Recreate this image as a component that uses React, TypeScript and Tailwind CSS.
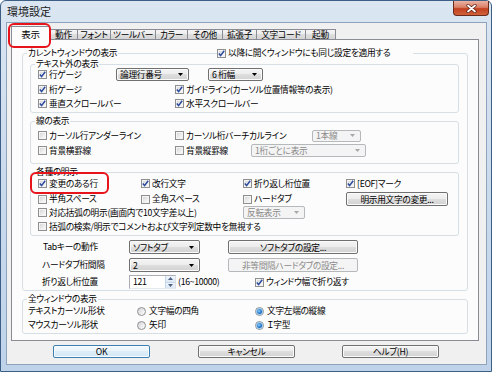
import React from "react";

function Check({ checked }: { checked?: boolean }) {
  return (
    <span className="relative inline-block w-[9px] h-[9px] shrink-0 border border-[#8e8f8f] bg-[linear-gradient(135deg,#cfd2d6_0%,#eeeeee_60%,#ffffff_100%)] shadow-[inset_0_0_0_1px_#f4f4f4]">
      {checked && (
        <svg className="absolute left-0 top-0" width="7" height="7" viewBox="0 0 7 7">
          <path d="M0.8 3.6 L2.6 5.6 L6.2 0.8" stroke="#2b4a9e" strokeWidth="1.5" fill="none" />
        </svg>
      )}
    </span>
  );
}

function CheckItem({ label, checked, className }: { label: string; checked?: boolean; className?: string }) {
  return (
    <div className={"flex items-center shrink-0 whitespace-nowrap " + (className ?? "")}>
      <Check checked={checked} />
      <span className="ml-[2px]">{label}</span>
    </div>
  );
}

function Radio({ checked }: { checked?: boolean }) {
  return (
    <span className="relative inline-flex items-center justify-center w-[9px] h-[9px] shrink-0 rounded-full border border-[#8e8f8f] bg-[linear-gradient(135deg,#cfd2d6_0%,#eeeeee_60%,#ffffff_100%)]">
      {checked && (
        <span className="w-[5px] h-[5px] rounded-full bg-[radial-gradient(circle_at_40%_40%,#8fd0ff_0%,#1a6fc4_60%,#0d4f9a_100%)] shadow-[0_0_0_1px_#9cc8ee]" />
      )}
    </span>
  );
}

function RadioItem({ label, checked, className }: { label: string; checked?: boolean; className?: string }) {
  return (
    <div className={"flex items-center shrink-0 whitespace-nowrap " + (className ?? "")}>
      <Radio checked={checked} />
      <span className="ml-[3px]">{label}</span>
    </div>
  );
}

function Arrow({ disabled }: { disabled?: boolean }) {
  return (
    <svg width="5" height="3" viewBox="0 0 5 3" className="shrink-0">
      <path d="M0 0 L5 0 L2.5 3 Z" fill={disabled ? "#a7a7a7" : "#000"} />
    </svg>
  );
}

function Combo({ text, className, disabled }: { text: string; className?: string; disabled?: boolean }) {
  return (
    <div
      className={
        "flex items-center shrink-0 rounded-[2px] border pl-[3px] pr-[5px] leading-[11px] whitespace-nowrap " +
        (disabled
          ? "border-[#b5b9bc] bg-[#f4f4f4] text-[#8a8a8a] "
          : "border-[#707070] bg-[linear-gradient(180deg,#f4f4f4_0%,#ececec_50%,#dedede_50%,#d2d2d2_100%)] shadow-[inset_0_0_0_1px_#fbfbfb] ") +
        (className ?? "")
      }
    >
      <span className="flex-1">{text}</span>
      <Arrow disabled={disabled} />
    </div>
  );
}

function Btn({ text, className, disabled, def }: { text: string; className?: string; disabled?: boolean; def?: boolean }) {
  return (
    <div
      className={
        "flex items-center justify-center shrink-0 rounded-[2px] border leading-[11px] whitespace-nowrap " +
        (disabled
          ? "border-[#b5b9bc] bg-[#f4f4f4] text-[#8a8a8a] "
          : def
          ? "border-[#3c7fb1] bg-[linear-gradient(180deg,#f3f9fd_0%,#e8f4fb_50%,#dcedf8_50%,#d3e8f6_100%)] shadow-[inset_0_0_0_1px_#f8fcfe] "
          : "border-[#707070] bg-[linear-gradient(180deg,#f4f4f4_0%,#ececec_50%,#dedede_50%,#d2d2d2_100%)] shadow-[inset_0_0_0_1px_#fbfbfb] ") +
        (className ?? "")
      }
    >
      {text}
    </div>
  );
}

function Group({ label, className, children }: { label: string; className?: string; children?: React.ReactNode }) {
  return (
    <div className={"relative shrink-0 border border-[#d5dfe5] rounded-[3px] flex flex-col " + (className ?? "")}>
      <span className="absolute top-[-6px] left-[4px] px-[1px] bg-[#fcfcfc] leading-[10px] whitespace-nowrap">{label}</span>
      {children}
    </div>
  );
}

function Tab({ text, className }: { text: string; className?: string }) {
  return (
    <div
      className={
        "-ml-px h-[10px] flex items-center justify-center border border-b-0 border-[#898c95] bg-[linear-gradient(180deg,#f4f4f4_0%,#ececec_50%,#dedede_50%,#d4d4d4_100%)] leading-[10px] whitespace-nowrap " +
        (className ?? "")
      }
    >
      {text}
    </div>
  );
}

export default function App() {
  return (
    <div className="relative w-[492px] h-[372px] overflow-hidden [font-family:'Noto_Sans_CJK_JP','Noto_Sans',sans-serif] [font-feature-settings:'palt'] text-[8.7px] tracking-[-0.3px] leading-[12px] text-black bg-white">
      <div className="w-full h-full flex flex-col border border-[#3e5f85] rounded-t-[6px] bg-[linear-gradient(180deg,#dbe6f2_0%,#cddcee_40%,#bed3ea_100%)]">
        {/* title bar */}
        <div className="h-[21px] shrink-0 flex items-start">
          <span className="ml-[6px] mt-[4px] text-[11px] tracking-normal leading-[13px] text-[#1a1a1a]">環境設定</span>
          <div className="ml-auto mr-[2px] w-[36px] h-[15px] rounded-b-[4px] border border-t-0 border-[#6a2a1c] bg-[linear-gradient(180deg,#eab3a4_0%,#d98068_45%,#c2401f_55%,#d0633c_100%)] flex items-center justify-center">
            <svg width="11" height="9" viewBox="0 0 11 9">
              <path d="M2 1.5 L9 7.5 M9 1.5 L2 7.5" stroke="#5a1c10" strokeWidth="3.2" strokeLinecap="round" />
              <path d="M2 1.5 L9 7.5 M9 1.5 L2 7.5" stroke="#ffffff" strokeWidth="1.8" strokeLinecap="round" />
            </svg>
          </div>
        </div>
        {/* client */}
        <div className="ml-[5px] w-[481px] h-[343px] shrink-0 border border-[#8ea4bd] bg-[#f0f0f0] flex flex-col">
          {/* tabs */}
          <div className="ml-[4px] mt-[3px] h-[13px] flex items-end shrink-0">
            <div className="relative z-10 -mb-px w-[39px] h-[14px] border border-b-0 border-[#898c95] bg-[#fcfcfc] flex items-start justify-center pt-[2px] leading-[10px] text-[9.5px]">
              表示
            </div>
            <Tab text="動作" className="w-[29px]" />
            <Tab text="フォント" className="w-[34px]" />
            <Tab text="ツールバー" className="w-[46px]" />
            <Tab text="カラー" className="w-[33px]" />
            <Tab text="その他" className="w-[36px]" />
            <Tab text="拡張子" className="w-[35px]" />
            <Tab text="文字コード" className="w-[50px]" />
            <Tab text="起動" className="w-[31px]" />
          </div>
          {/* panel */}
          <div className="ml-[4px] w-[468px] h-[302px] shrink-0 border border-[#898c95] bg-[#fcfcfc] flex flex-col">
            <Group label="カレントウィンドウの表示" className="ml-[10px] mt-[13px] w-[446px] h-[238px]">
              <div className="absolute top-[-6px] left-[194px] w-[196px] h-[10px] bg-[#fcfcfc] flex items-center">
                <CheckItem checked label="以降に開くウィンドウにも同じ設定を適用する" />
              </div>

              <Group label="テキスト外の表示" className="ml-[7px] mt-[10px] w-[429px] h-[49px]">
                <div className="mt-[3px] h-[13px] pl-[7px] flex items-center">
                  <CheckItem checked label="行ゲージ" className="w-[78px]" />
                  <Combo text="論理行番号" className="w-[73px] h-[13px]" />
                  <Combo text="6 桁幅" className="ml-[19px] w-[55px] h-[13px]" />
                </div>
                <div className="mt-[2px] h-[13px] pl-[7px] flex items-center">
                  <CheckItem checked label="桁ゲージ" className="w-[137px]" />
                  <CheckItem checked label="ガイドライン(カーソル位置情報等の表示)" />
                </div>
                <div className="mt-[1px] h-[13px] pl-[7px] flex items-center">
                  <CheckItem checked label="垂直スクロールバー" className="w-[137px]" />
                  <CheckItem checked label="水平スクロールバー" />
                </div>
              </Group>

              <Group label="線の表示" className="ml-[7px] mt-[8px] w-[429px] h-[43px]">
                <div className="mt-[7px] h-[13px] pl-[7px] flex items-center">
                  <CheckItem label="カーソル行アンダーライン" className="w-[137px]" />
                  <CheckItem label="カーソル桁バーチカルライン" className="w-[137px]" />
                  <Combo disabled text="1本線" className="w-[49px] h-[12px]" />
                </div>
                <div className="mt-[2px] h-[13px] pl-[7px] flex items-center">
                  <CheckItem label="背景横罫線" className="w-[137px]" />
                  <CheckItem label="背景縦罫線" className="w-[76px]" />
                  <Combo disabled text="1桁ごとに表示" className="w-[115px] h-[13px]" />
                </div>
              </Group>

              <Group label="各種の明示" className="ml-[7px] mt-[8px] w-[429px] h-[64px]">
                <div className="mt-[4px] h-[13px] pl-[7px] flex items-center">
                  <CheckItem checked label="変更のある行" className="w-[103px]" />
                  <CheckItem checked label="改行文字" className="w-[102px]" />
                  <CheckItem checked label="折り返し桁位置" className="w-[103px]" />
                  <CheckItem checked label="[EOF]マーク" />
                </div>
                <div className="mt-[2px] h-[14px] pl-[7px] flex items-center">
                  <CheckItem label="半角スペース" className="w-[103px]" />
                  <CheckItem label="全角スペース" className="w-[102px]" />
                  <CheckItem label="ハードタブ" className="w-[103px]" />
                  <Btn text="明示用文字の変更..." className="w-[102px] h-[14px]" />
                </div>
                <div className="h-[13px] pl-[7px] flex items-center">
                  <CheckItem label="対応括弧の明示(画面内で10文字差以上)" className="w-[205px]" />
                  <Combo disabled text="反転表示" className="w-[62px] h-[13px]" />
                </div>
                <div className="mt-[1px] h-[13px] pl-[7px] flex items-center">
                  <CheckItem label="括弧の検索/明示でコメントおよび文字列定数中を無視する" />
                </div>
              </Group>

              <div className="mt-[4px] h-[14px] pl-[20px] flex items-center">
                <span className="w-[86px] shrink-0">Tabキーの動作</span>
                <Combo text="ソフトタブ" className="w-[71px] h-[14px]" />
                <Btn text="ソフトタブの設定..." className="ml-[28px] w-[130px] h-[14px]" />
              </div>
              <div className="mt-[4px] h-[14px] pl-[19px] flex items-center">
                <span className="w-[87px] shrink-0">ハードタブ桁間隔</span>
                <Combo text="2" className="w-[71px] h-[14px]" />
                <Btn disabled text="非等間隔ハードタブの設定..." className="ml-[28px] w-[130px] h-[14px]" />
              </div>
              <div className="mt-[3px] h-[14px] pl-[19px] flex items-center">
                <span className="w-[87px] shrink-0">折り返し桁位置</span>
                <div className="w-[47px] h-[14px] shrink-0 flex items-stretch border border-[#abadb3] border-b-[#e3e9ef] border-r-[#dbdfe6] bg-white">
                  <span className="flex-1 pl-[3px] leading-[12px]">121</span>
                  <div className="w-[10px] flex flex-col border-l border-[#c5d6e8]">
                    <div className="flex-1 flex items-center justify-center bg-[linear-gradient(180deg,#f2f7fc,#dbe8f5)] border-b border-[#c5d6e8]">
                      <svg width="5" height="3" viewBox="0 0 5 3"><path d="M0 3 L5 3 L2.5 0 Z" fill="#4d6185" /></svg>
                    </div>
                    <div className="flex-1 flex items-center justify-center bg-[linear-gradient(180deg,#f2f7fc,#dbe8f5)]">
                      <svg width="5" height="3" viewBox="0 0 5 3"><path d="M0 0 L5 0 L2.5 3 Z" fill="#4d6185" /></svg>
                    </div>
                  </div>
                </div>
                <span className="ml-[2px] w-[77px] shrink-0">(16~10000)</span>
                <CheckItem checked label="ウィンドウ幅で折り返す" />
              </div>
            </Group>

            <Group label="全ウィンドウの表示" className="ml-[10px] mt-[8px] w-[446px] h-[35px]">
              <div className="mt-[5px] h-[12px] pl-[5px] flex items-center">
                <span className="w-[109px] shrink-0">テキストカーソル形状</span>
                <RadioItem label="文字幅の四角" className="w-[118px]" />
                <RadioItem checked label="文字左端の縦線" />
              </div>
              <div className="mt-[2px] h-[12px] pl-[5px] flex items-center">
                <span className="w-[109px] shrink-0">マウスカーソル形状</span>
                <RadioItem label="矢印" className="w-[118px]" />
                <RadioItem checked label="Ｉ字型" />
              </div>
            </Group>
          </div>
          {/* bottom buttons */}
          <div className="mt-[4px] ml-[46px] h-[13px] flex items-center">
            <Btn def text="OK" className="w-[97px] h-[13px]" />
            <Btn text="キャンセル" className="ml-[48px] w-[97px] h-[13px]" />
            <Btn text="ヘルプ(H)" className="ml-[47px] w-[97px] h-[13px]" />
          </div>
        </div>
      </div>
      {/* red annotation boxes */}
      <div className="absolute left-[8px] top-[23px] w-[43px] h-[25px] border-2 border-[#e8141b] rounded-[6px] z-20" />
      <div className="absolute left-[30px] top-[172px] w-[79px] h-[22px] border-2 border-[#e8141b] rounded-[6px] z-20" />
    </div>
  );
}
